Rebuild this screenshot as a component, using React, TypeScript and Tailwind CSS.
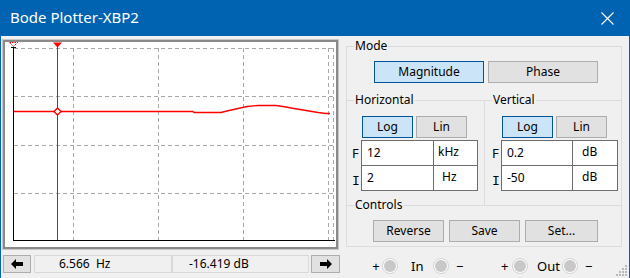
import React from "react";

const F = { fontFamily: '"Segoe UI", "Noto Sans", sans-serif' };

function Btn({ children, active, className = "" }: { children: React.ReactNode; active?: boolean; className?: string }) {
  return (
    <div
      className={
        "flex items-center justify-center text-[12px] text-black border " +
        (active ? "bg-[#cce4f7] border-[#005499] " : "bg-[#e1e1e1] border-[#adadad] ") +
        className
      }
    >
      {children}
    </div>
  );
}

function Terminal({ className = "" }: { className?: string }) {
  return (
    <div className={"w-[16px] h-[16px] rounded-full border border-[#d2d2d2] bg-white flex items-center justify-center shrink-0 " + className}>
      <div className="w-[12px] h-[12px] rounded-full bg-[#c8c8c8]" />
    </div>
  );
}

function Plot() {
  const hy = [48.5, 96.5, 145.5, 193.5];
  const vx = [73.5, 158.5, 243.5, 328.5, 333.5];
  return (
    <svg width={331} height={204} viewBox="5 42 331 204" className="block">
      <rect x={5} y={42} width={331} height={204} fill="#ffffff" />
      {hy.map((y) => (
        <line key={"h" + y} x1={14} x2={334} y1={y} y2={y} stroke="#a8a8a8" strokeWidth={1} strokeDasharray="4 3" shapeRendering="crispEdges" />
      ))}
      {vx.map((x) => (
        <line key={"v" + x} x1={x} x2={x} y1={48} y2={240} stroke="#a8a8a8" strokeWidth={1} strokeDasharray="4 3" shapeRendering="crispEdges" />
      ))}
      <line x1={13.5} x2={13.5} y1={47} y2={241} stroke="#000" strokeWidth={1} shapeRendering="crispEdges" />
      <line x1={11} x2={16} y1={47.5} y2={47.5} stroke="#000" strokeWidth={1} shapeRendering="crispEdges" />
      <line x1={13} x2={335} y1={240.5} y2={240.5} stroke="#000" strokeWidth={1} shapeRendering="crispEdges" />
      <polyline
        points="14,111.5 193,111.5 194,112.5 221,112.5 229,110.5 238,108.5 247,106.5 258,105.5 276,105.5 283,106.5 294,108.5 306,110.5 318,112.5 326,113.5 330,113.5"
        fill="none"
        stroke="#ff0000"
        strokeWidth={1.3}
      />
      <line x1={57.5} x2={57.5} y1={43} y2={240} stroke="#ff0000" strokeWidth={1} shapeRendering="crispEdges" />
      <polygon points="53,42.5 62,42.5 57.5,47.5" fill="#ff0000" />
      <polygon points="9.5,42.5 17.5,42.5 13.5,46.5" fill="none" stroke="#ff0000" strokeWidth={1} strokeDasharray="1.5 1" />
      <polygon points="57.5,108 61,111.5 57.5,115 54,111.5" fill="#fff" stroke="#ff0000" strokeWidth={1.4} />
    </svg>
  );
}

function Arrow({ dir }: { dir: "l" | "r" }) {
  return (
    <svg width={12} height={10} viewBox="0 0 12 10">
      {dir === "l" ? (
        <polygon points="0,5 5,0 5,3 12,3 12,7 5,7 5,10" fill="#000" />
      ) : (
        <polygon points="12,5 7,0 7,3 0,3 0,7 7,7 7,10" fill="#000" />
      )}
    </svg>
  );
}

function InputRow({ v, u, uPad, vPad, label, top }: { v: string; u: string; uPad: string; vPad: string; label: string; top?: boolean }) {
  return (
    <div className="flex items-stretch">
      <div
        className={"w-[9px] flex items-center text-[13px] text-black " + (top ? "pt-[2px]" : "pt-[6px]")}
        style={{ fontFamily: top ? '"Segoe UI", "Noto Sans", sans-serif' : '"Liberation Mono", monospace' }}
      >
        {label}
      </div>
      <div className={"flex border-x border-[#6d6d6d] " + (top ? "border-y h-[26px]" : "border-b h-[25px]")}>
        <div className={"bg-white flex items-center text-[12px] text-black border-r border-[#6d6d6d] " + vPad}>{v}</div>
        <div className={"bg-white flex items-start pt-[2px] text-[12px] text-black " + uPad}>{u}</div>
      </div>
    </div>
  );
}

function Grip() {
  const dots: [number, number][] = [];
  for (let r = 0; r < 4; r++) {
    for (let c = 3 - r; c < 4; c++) {
      dots.push([c * 3, r * 3]);
    }
  }
  return (
    <svg width={12} height={12} viewBox="0 0 12 12" className="absolute right-[1px] bottom-[1px]">
      {dots.map(([x, y], i) => (
        <rect key={i} x={x} y={y} width={2} height={2} fill="#b9b9b9" />
      ))}
    </svg>
  );
}

export default function App() {
  return (
    <div className="relative w-[630px] h-[278px] bg-[#f0f0f0] border-x border-[#0063b1] flex flex-col overflow-hidden" style={F}>
      <div className="h-[36px] bg-[#0063b1] flex items-center justify-between pl-[9px] pr-[15px] shrink-0">
        <span className="text-white text-[15px] leading-none pb-[1px]">Bode Plotter-XBP2</span>
        <svg width={13} height={13} viewBox="0 0 13 13">
          <path d="M0.5 0.5 L12.5 12.5 M12.5 0.5 L0.5 12.5" stroke="#fff" strokeWidth={1.1} />
        </svg>
      </div>
      <div className="flex flex-1">
        <div className="w-[340px] shrink-0 pl-[1px] pt-[3px] flex flex-col">
          <div className="w-[337px] h-[211px] border border-[#c8c8c8]">
            <div className="w-full h-full border-2 border-[#8a8a8a] bg-white">
              <Plot />
            </div>
          </div>
          <div className="flex mt-[5px] ml-[1px] h-[18px] gap-[3px]">
            <Btn className="w-[28px] h-[18px]">
              <Arrow dir="l" />
            </Btn>
            <div className="flex">
              <div className="w-[138px] h-[18px] border border-[#d9d9d9] bg-[#f0f0f0] text-[12px] text-black flex items-center pl-[24px] whitespace-pre">
                6.566  Hz
              </div>
              <div className="w-[137px] h-[18px] border border-[#d9d9d9] bg-[#f0f0f0] text-[12px] text-black flex items-center pl-[16px] whitespace-pre">
                -16.419 dB
              </div>
            </div>
            <Btn className="w-[29px] h-[18px] -ml-[1px]">
              <Arrow dir="r" />
            </Btn>
          </div>
        </div>
        <div className="ml-[5px] flex flex-col flex-1">
          <div className="mt-[10px] w-[276px] h-[201px] border border-[#dcdcdc] flex flex-col relative">
            {/* Mode */}
            <div className="h-[53px] relative">
              <span className="absolute left-[7px] -top-[10px] bg-[#f0f0f0] px-[1px] text-[12px] text-black">Mode</span>
              <div className="flex gap-[4px] pl-[27px] pt-[14px]">
                <Btn active className="w-[110px] h-[22px]">Magnitude</Btn>
                <Btn className="w-[110px] h-[22px]">Phase</Btn>
              </div>
            </div>
            {/* Horizontal / Vertical */}
            <div className="h-[105px] border-t border-[#dcdcdc] flex">
              <div className="w-[138px] border-r border-[#dcdcdc] relative">
                <span className="absolute left-[7px] -top-[10px] bg-[#f0f0f0] px-[1px] text-[12px] text-black">Horizontal</span>
                <div className="flex gap-[3px] pl-[15px] pt-[15px]">
                  <Btn active className="w-[51px] h-[22px]">Log</Btn>
                  <Btn className="w-[51px] h-[22px]">Lin</Btn>
                </div>
                <div className="pl-[5px] pt-[2px] flex flex-col">
                  <InputRow label="F" top v="12" u="kHz" vPad="w-[72px] pl-[5px]" uPad="w-[43px] pl-[4px]" />
                  <InputRow label="I" v="2" u="Hz" vPad="w-[72px] pl-[5px]" uPad="w-[43px] pl-[8px]" />
                </div>
              </div>
              <div className="flex-1 relative">
                <span className="absolute left-[7px] -top-[10px] bg-[#f0f0f0] px-[1px] text-[12px] text-black">Vertical</span>
                <div className="flex gap-[3px] pl-[17px] pt-[15px]">
                  <Btn active className="w-[51px] h-[22px]">Log</Btn>
                  <Btn className="w-[51px] h-[22px]">Lin</Btn>
                </div>
                <div className="pl-[7px] pt-[2px] flex flex-col">
                  <InputRow label="F" top v="0.2" u="dB" vPad="w-[71px] pl-[5px]" uPad="w-[44px] pl-[9px]" />
                  <InputRow label="I" v="-50" u="dB" vPad="w-[71px] pl-[5px]" uPad="w-[44px] pl-[9px]" />
                </div>
              </div>
            </div>
            {/* Controls */}
            <div className="flex-1 border-t border-[#dcdcdc] relative">
              <span className="absolute left-[7px] -top-[10px] bg-[#f0f0f0] px-[1px] text-[12px] text-black">Controls</span>
              <div className="flex gap-[5px] pl-[26px] pt-[14px]">
                <Btn className="w-[71px] h-[22px]">Reverse</Btn>
                <Btn className="w-[71px] h-[22px]">Save</Btn>
                <Btn className="w-[73px] h-[22px]">Set...</Btn>
              </div>
            </div>
          </div>
          <div className="flex items-center mt-[4px] h-[30px] pl-[25px] text-[13px] text-black leading-none">
            <span className="w-[10px] text-center">+</span>
            <Terminal className="ml-[1px]" />
            <span className="ml-[13px] w-[12px]">In</span>
            <Terminal className="ml-[10px]" />
            <span className="ml-[7px] w-[8px]">−</span>
            <span className="ml-[37px] w-[8px]">+</span>
            <Terminal className="ml-[3px]" />
            <span className="ml-[9px] w-[22px]">Out</span>
            <Terminal className="ml-[3px]" />
            <span className="ml-[7px] w-[8px]">−</span>
          </div>
        </div>
      </div>
      <Grip />
    </div>
  );
}
